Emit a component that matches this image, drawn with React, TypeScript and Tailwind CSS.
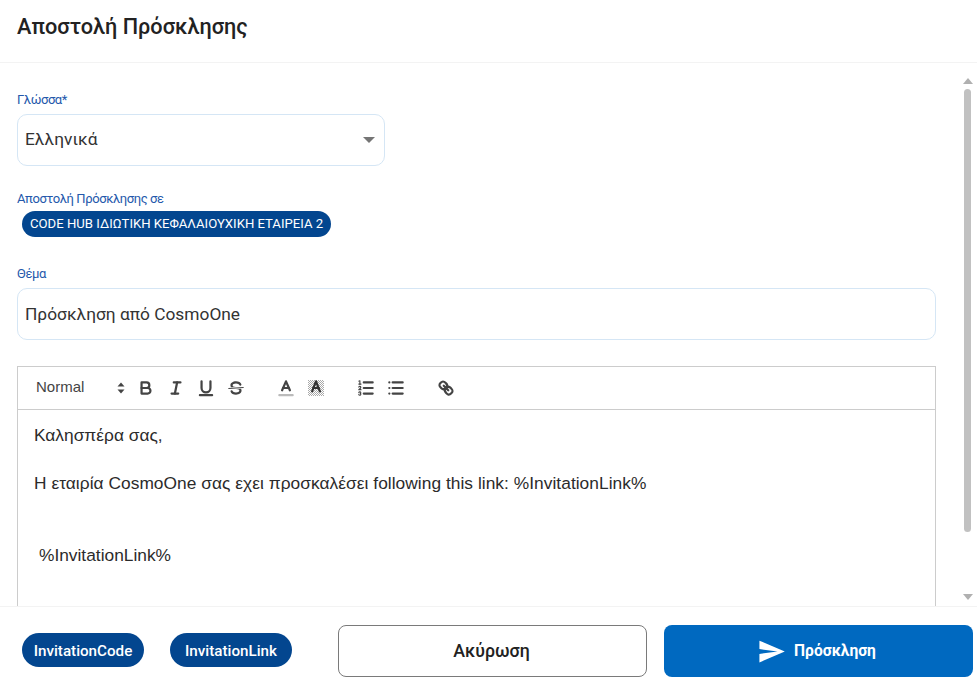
const Tb = ({ children }: { children: React.ReactNode }) => (
  <span className="flex h-[24px] w-[30px] items-center justify-center">
    <svg viewBox="0 0 18 18" className="h-[20px] w-[20px]" fill="none" stroke="#444" strokeWidth="2" strokeLinecap="round" strokeLinejoin="round">
      {children}
    </svg>
  </span>
);

export default function App() {
  return (
    <div className="flex h-[685px] w-[977px] flex-col overflow-hidden bg-white font-['Roboto',sans-serif] text-[#212121]">
      <header className="flex h-[63px] shrink-0 items-start border-b border-[#f3f3f3] pl-[17px] pt-[12px]">
        <h1 className="text-[21.7px] font-medium leading-[30px] text-[#222]">Αποστολή Πρόσκλησης</h1>
      </header>

      <div className="flex min-h-0 flex-1">
        <main className="flex w-[936px] shrink-0 flex-col overflow-hidden pl-[17px] pt-[29px]">
          <label className="text-[13px] leading-[16px] tracking-[-0.4px] text-[#2458ab]">Γλώσσα*</label>
          <div className="mt-[6px] flex h-[52px] w-[368px] shrink-0 items-center justify-between rounded-[10px] border border-[#d5e6f5] pl-[7px] pr-[9px] text-[17.33px]">
            <span className="text-[#333]">Ελληνικά</span>
            <span className="h-0 w-0 border-x-[6px] border-t-[6px] border-x-transparent border-t-[#757575]" />
          </div>

          <label className="mt-[25px] text-[13px] leading-[16px] tracking-[-0.4px] text-[#2458ab]">Αποστολή Πρόσκλησης σε</label>
          <div className="mt-[4px] flex pl-[5px]">
            <span className="flex h-[26px] items-center rounded-full bg-[#03468f] px-[8px] text-[13.15px] text-white">CODE HUB ΙΔΙΩΤΙΚΗ ΚΕΦΑΛΑΙΟΥΧΙΚΗ ΕΤΑΙΡΕΙΑ 2</span>
          </div>

          <label className="mt-[29px] text-[13px] leading-[16px] tracking-[-0.4px] text-[#2458ab]">Θέμα</label>
          <div className="mt-[6px] flex h-[52px] w-full shrink-0 items-center rounded-[10px] border border-[#d5e6f5] pl-[7px] pt-[1px] text-[17.33px] text-[#333]">
            <span>Πρόσκληση από CosmoOne</span>
          </div>

          <section className="mt-[26px] flex w-full shrink-0 flex-col border border-[#ccc] font-['Liberation_Sans',sans-serif]">
            <div className="flex h-[43px] items-center border-b border-[#ccc] pl-[10px]">
              <div className="flex w-[103px] items-center justify-between pl-[8px] pr-[6px]">
                <span className="relative top-[-1px] text-[15px] text-[#444]">Normal</span>
                <svg viewBox="0 0 8 12" className="h-[12px] w-[8px]" fill="#444"><path d="M4 0.5 7.5 4.5H.5ZM4 11.5 .5 7.5H7.5Z" /></svg>
              </div>
              <Tb>
                <path d="M5,4H9.5A2.5,2.5,0,0,1,12,6.5v0A2.5,2.5,0,0,1,9.5,9H5A0,0,0,0,1,5,9V4A0,0,0,0,1,5,4Z" />
                <path d="M5,9h5.5A2.5,2.5,0,0,1,13,11.5v0A2.5,2.5,0,0,1,10.5,14H5a0,0,0,0,1,0,0V9A0,0,0,0,1,5,9Z" />
              </Tb>
              <Tb>
                <line x1="7" x2="13" y1="4" y2="4" />
                <line x1="5" x2="11" y1="14" y2="14" />
                <line x1="8" x2="10" y1="14" y2="4" />
              </Tb>
              <Tb>
                <path d="M5,3V9a4.012,4.012,0,0,0,4,4H9a4.012,4.012,0,0,0,4-4V3" />
                <rect x="3" y="15" width="12" height="1" rx=".5" fill="#444" strokeWidth="1" />
              </Tb>
              <Tb>
                <line x1="15.5" x2="2.5" y1="8.5" y2="9.5" strokeWidth="1" />
                <path stroke="none" fill="#444" d="M9.007,8C6.542,7.791,6,7.519,6,6.5,6,5.792,7.283,5,9,5c1.571,0,2.765.679,2.969,1.309a1,1,0,0,0,1.9-.617C13.356,4.106,11.354,3,9,3,6.2,3,4,4.538,4,6.5a3.2,3.2,0,0,0,.5,1.843Z" />
                <path stroke="none" fill="#444" d="M8.984,10C11.457,10.208,12,10.48,12,11.5c0,.708-1.283,1.5-3,1.5-1.571,0-2.765-.679-2.969-1.309a1,1,0,1,0-1.9.617C4.644,13.894,6.646,15,9,15c2.8,0,5-1.538,5-3.5a3.2,3.2,0,0,0-.5-1.843Z" />
              </Tb>
              <span className="w-[20px]" />
              <Tb>
                <line x1="3" x2="15" y1="15.5" y2="15.5" stroke="#bbb" />
                <polyline points="5.5 11 9 3 12.5 11" />
                <line x1="11.63" x2="6.38" y1="9" y2="9" />
              </Tb>
              <Tb>
                <defs>
                  <pattern id="hatch" width="1.8" height="1.8" patternUnits="userSpaceOnUse">
                    <rect width="0.9" height="0.9" fill="#aaa" stroke="none" />
                    <rect x="0.9" y="0.9" width="0.9" height="0.9" fill="#aaa" stroke="none" />
                  </pattern>
                </defs>
                <rect x="1.8" y="1.8" width="14.4" height="14.4" fill="url(#hatch)" stroke="none" />
                <polyline points="5.5 12 9 3 12.5 12" stroke="#333" />
                <line x1="11.63" x2="6.38" y1="9" y2="9" stroke="#333" />
              </Tb>
              <span className="w-[20px]" />
              <Tb>
                <line x1="7" x2="15" y1="4" y2="4" />
                <line x1="7" x2="15" y1="9" y2="9" />
                <line x1="7" x2="15" y1="14" y2="14" />
                <line x1="2.5" x2="4.5" y1="5.5" y2="5.5" strokeWidth="1" />
                <path stroke="none" fill="#444" d="M3.5,6A0.5,0.5,0,0,1,3,5.5V3.085l-0.276.138A0.5,0.5,0,0,1,2.053,3c-0.124-.247-0.023-0.324.224-0.447l1-.5A0.5,0.5,0,0,1,4,2.5v3A0.5,0.5,0,0,1,3.5,6Z" />
                <path strokeWidth="1" d="M4.5,10.5h-2c0-.234,1.85-1.076,1.85-2.234A0.959,0.959,0,0,0,2.5,8.156" />
                <path strokeWidth="1" d="M2.5,14.846a0.959,0.959,0,0,0,1.85-.109A0.7,0.7,0,0,0,3.75,14a0.688,0.688,0,0,0,.6-0.736,0.959,0.959,0,0,0-1.85-.109" />
              </Tb>
              <Tb>
                <line x1="6" x2="15" y1="4" y2="4" />
                <line x1="6" x2="15" y1="9" y2="9" />
                <line x1="6" x2="15" y1="14" y2="14" />
                <line x1="3" x2="3" y1="4" y2="4" />
                <line x1="3" x2="3" y1="9" y2="9" />
                <line x1="3" x2="3" y1="14" y2="14" />
              </Tb>
              <span className="w-[20px]" />
              <Tb>
                <line x1="7" x2="11" y1="7" y2="11" />
                <path d="M8.9,4.577a3.476,3.476,0,0,1,.36,4.679A3.476,3.476,0,0,1,4.577,8.9C3.185,7.5,2.035,6.4,4.217,4.217S7.5,3.185,8.9,4.577Z" />
                <path d="M13.423,9.1a3.476,3.476,0,0,0-4.679-.36,3.476,3.476,0,0,0,.36,4.679c1.392,1.392,2.5,2.542,4.679.36S14.815,10.5,13.423,9.1Z" />
              </Tb>
            </div>
            <div className="h-[260px] pl-[16px] pt-[13px] text-[17.33px] leading-[24px] text-[#2b2b2b]">
              <p>Καλησπέρα σας,</p>
              <p className="h-[24px]" />
              <p className="tracking-[0.04px]">Η εταιρία CosmoOne σας εχει προσκαλέσει following this link: %InvitationLink%</p>
              <p className="h-[48px]" />
              <p className="pl-[5px]">%InvitationLink%</p>
            </div>
          </section>
        </main>

        <aside className="ml-[26px] flex w-[15px] flex-col items-center pr-[4px] pt-[15px]">
          <span className="h-0 w-0 border-x-[5px] border-b-[6px] border-x-transparent border-b-[#b0b0b0]" />
          <span className="mt-[5px] h-[443px] w-[7px] rounded-full bg-[#c1c1c1]" />
          <span className="mt-[62px] h-0 w-0 border-x-[5px] border-t-[6px] border-x-transparent border-t-[#b0b0b0]" />
        </aside>
      </div>

      <footer className="flex h-[79px] shrink-0 items-start border-t border-[#f3f3f3]">
        <div className="flex gap-[26px] pl-[22px] pt-[26px]">
          <span className="flex h-[34px] w-[122px] items-center justify-center rounded-full bg-[#03468f] pt-[2px] text-[15.2px] font-medium text-white">InvitationCode</span>
          <span className="flex h-[34px] w-[122px] items-center justify-center rounded-full bg-[#03468f] pt-[2px] text-[15.2px] font-medium text-white">InvitationLink</span>
        </div>
        <button className="ml-[46px] mt-[18px] flex h-[52px] w-[309px] items-center justify-center rounded-[8px] border border-[#7a7a7a] bg-white pr-[2px] text-[17.8px] font-medium text-[#222]">Ακύρωση</button>
        <button className="ml-[17px] mt-[18px] flex h-[52px] w-[309px] items-center justify-center gap-[8px] rounded-[8px] bg-[#0069c0] pr-[4px] pt-[1px] text-[15.6px] font-bold text-white">
          <svg viewBox="0 0 24 24" className="h-[29px] w-[29px]" fill="white"><path d="M2.01 21 23 12 2.01 3 2 10l15 2-15 2z" /></svg>
          Πρόσκληση
        </button>
      </footer>
    </div>
  );
}
